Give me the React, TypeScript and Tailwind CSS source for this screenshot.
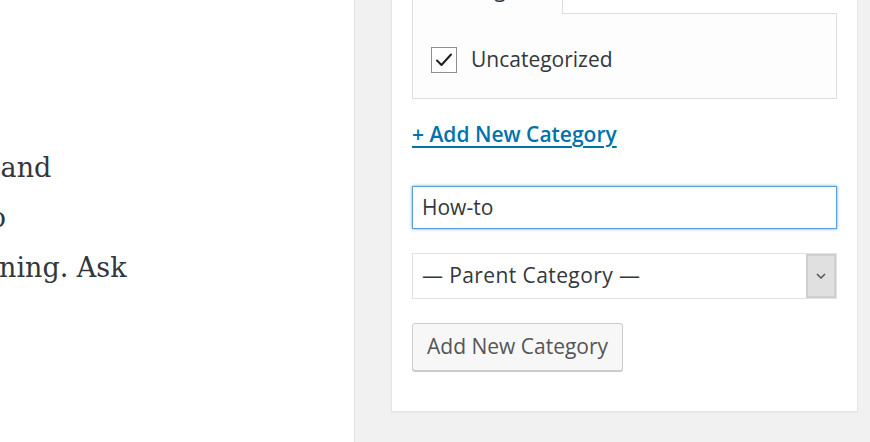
import React from 'react'

const ui = { fontFamily: '"Open Sans", "Noto Sans", sans-serif' }
const serif = { fontFamily: '"DejaVu Serif", "Liberation Serif", serif' }

function CheckIcon() {
  return (
    <svg className="w-[18px] h-[18px]" viewBox="0 0 18 18" fill="none">
      <path d="M2 9.5l4.5 4.5L16 3.5" stroke="#1e1e1e" strokeWidth={2} strokeLinecap="round" strokeLinejoin="round" />
    </svg>
  )
}

function Chevron() {
  return (
    <svg className="w-[10px] h-[6px]" viewBox="0 0 10 6" fill="none">
      <path d="M1 1l4 4 4-4" stroke="#555" strokeWidth={1.5} />
    </svg>
  )
}

export default function App() {
  return (
    <div className="flex w-[870px] h-[442px] overflow-hidden bg-[#f1f1f1]">
      {/* post body, cut off at the left */}
      <div className="w-[355px] shrink-0 bg-white border-r border-[#e2e2e2] overflow-hidden text-[#32373c] text-[27px] leading-[50px]" style={serif}>
        <div className="pt-[143px] whitespace-nowrap">
          <div className="ml-[-8px]">&nbsp;and</div>
          <div className="ml-[-21px]">to</div>
          <div className="ml-[-1px]">ning. Ask</div>
        </div>
      </div>

      {/* sidebar */}
      <div className="flex-1 pl-[36px] pr-[12px]">
        <div className="bg-white border-x border-b border-[#e5e5e5] shadow-[0_1px_1px_rgba(0,0,0,0.04)] h-[412px] pl-[20px] pr-[20px]" style={ui}>
          {/* tabs */}
          <div className="flex h-[14px]">
            <div className="w-[151px] h-[14px] border-x border-[#dddddd] bg-[#fdfdfd] overflow-hidden">
              <div className="mt-[-28px] pl-[37px] text-[21px] leading-[34px] text-[#32373c]">Categories</div>
            </div>
            <div className="flex-1 h-[14px] border-b border-[#dddddd] overflow-hidden">
              <div className="mt-[-31px] pl-[16px] text-[21px] leading-[34px] text-[#a7d6ea]">Most Used</div>
            </div>
          </div>
          <div className="h-[85px] border-x border-b border-[#dddddd] bg-[#fdfdfd] flex items-center pl-[18px] gap-[14px] pt-[7px]">
            <div className="w-[26px] h-[26px] border border-[#8c8f94] bg-white flex items-center justify-center">
              <CheckIcon />
            </div>
            <span className="text-[21px] text-[#32373c]">Uncategorized</span>
          </div>

          {/* add new category */}
          <div className="mt-[20px]">
            <a href="#" className="text-[21px] font-semibold text-[#0073aa] underline underline-offset-[4px] decoration-[1.5px]">
              + Add New Category
            </a>
          </div>

          <input
            type="text"
            defaultValue="How-to"
            className="mt-[35px] block w-full h-[43px] px-[9px] border border-[#5b9dd9] shadow-[0_0_3px_rgba(30,140,190,0.7)] text-[21px] text-[#32373c] outline-none"
            style={ui}
          />

          <div className="mt-[24px] flex h-[46px] border border-[#e2e2e2]">
            <div className="flex-1 flex items-center pl-[9px] text-[21px] tracking-[0.4px] text-[#32373c]">— Parent Category —</div>
            <div className="w-[30px] bg-[#e0e0e0] border-2 border-[#cfcfcf] flex items-center justify-center">
              <Chevron />
            </div>
          </div>

          <button
            type="button"
            className="mt-[24px] h-[48px] px-[14px] bg-[#f7f7f7] border border-[#cccccc] rounded-[3px] shadow-[0_1px_0_#cccccc] text-[21px] text-[#555555]"
            style={ui}
          >
            Add New Category
          </button>
        </div>
      </div>
    </div>
  )
}
